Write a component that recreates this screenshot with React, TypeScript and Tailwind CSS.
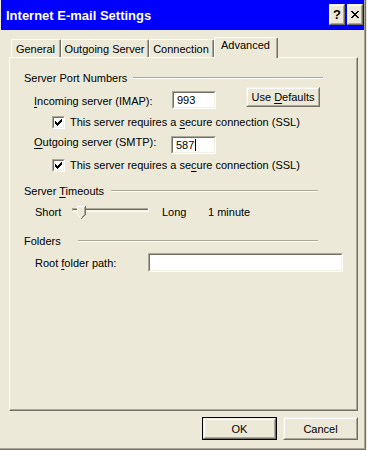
import React from "react";

const U = ({ children }: { children: React.ReactNode }) => (
  <span className="underline underline-offset-[2px] decoration-[1px]">{children}</span>
);

function Sunken({ className = "", children, pad = "pl-[3px]" }: { className?: string; children?: React.ReactNode; pad?: string }) {
  return (
    <div className={`border border-t-[#aca899] border-l-[#aca899] border-r-white border-b-white ${className}`}>
      <div className={`h-full w-full border border-t-[#716f64] border-l-[#716f64] border-r-[#f1efe2] border-b-[#f1efe2] bg-white flex items-center ${pad}`}>
        {children}
      </div>
    </div>
  );
}

function Raised({ className = "", children }: { className?: string; children?: React.ReactNode }) {
  return (
    <div className={`border border-t-[#f1efe2] border-l-[#f1efe2] border-r-[#716f64] border-b-[#716f64] bg-[#ece9d8] ${className}`}>
      <div className="h-full w-full border border-t-white border-l-white border-r-[#aca899] border-b-[#aca899] flex items-center justify-center">
        {children}
      </div>
    </div>
  );
}

const CHECK = ["......#", ".....##", "#...###", "##.###.", "#####..", ".###...", "..#...."];
const XGLYPH = ["##....##", ".##..##.", "..####..", "...##...", "..####..", ".##..##.", "##....##"];

function Pixels({ rows, ox, oy, w, h }: { rows: string[]; ox: number; oy: number; w: number; h: number }) {
  const rects: React.ReactNode[] = [];
  rows.forEach((r, y) =>
    r.split("").forEach((c, x) => {
      if (c === "#") rects.push(<rect key={`${x}-${y}`} x={x + ox} y={y + oy} width={1} height={1} fill="#000" />);
    })
  );
  return (
    <svg width={w} height={h} viewBox={`0 0 ${w} ${h}`} shapeRendering="crispEdges">
      {rects}
    </svg>
  );
}

function CheckBox() {
  return (
    <Sunken className="w-[13px] h-[13px] shrink-0" pad="">
      <Pixels rows={CHECK} ox={1} oy={1} w={9} h={9} />
    </Sunken>
  );
}

function Tab({ w, children }: { w: string; children: React.ReactNode }) {
  return (
    <div className={`${w} h-[18px] border-t border-l border-t-white border-l-white border-r border-r-[#716f64] rounded-tl-[2px] rounded-tr-[2px]`}>
      <div className="h-full border-r border-r-[#aca899] flex items-center justify-center">{children}</div>
    </div>
  );
}

function Group({ label, lw, lineW, mt }: { label: React.ReactNode; lw: string; lineW: string; mt: string }) {
  return (
    <div className={`${mt} h-[14px] flex items-center pl-[14px]`}>
      <span className={`${lw} shrink-0 whitespace-nowrap`}>{label}</span>
      <div className={`${lineW} h-[2px] border-t border-t-[#aca899] border-b border-b-white`} />
    </div>
  );
}

function Slider() {
  return (
    <svg width={77} height={16} viewBox="0 0 77 16" shapeRendering="crispEdges">
      <rect x={0} y={4} width={77} height={1} fill="#aca899" />
      <rect x={0} y={5} width={1} height={3} fill="#aca899" />
      <rect x={1} y={5} width={75} height={1} fill="#716f64" />
      <rect x={1} y={6} width={75} height={1} fill="#f1efe2" />
      <rect x={0} y={7} width={77} height={1} fill="#fff" />
      <rect x={76} y={4} width={1} height={4} fill="#fff" />
      {/* thumb */}
      <polygon points="5,2 14,2 14,10 10,14 9,14 5,10" fill="#ece9d8" />
      <rect x={5} y={2} width={8} height={1} fill="#fff" />
      <rect x={5} y={2} width={1} height={9} fill="#fff" />
      <rect x={13} y={2} width={1} height={9} fill="#716f64" />
      <rect x={12} y={3} width={1} height={8} fill="#aca899" />
      <rect x={6} y={11} width={1} height={1} fill="#fff" />
      <rect x={7} y={12} width={1} height={1} fill="#fff" />
      <rect x={8} y={13} width={1} height={1} fill="#fff" />
      <rect x={12} y={11} width={1} height={1} fill="#716f64" />
      <rect x={11} y={12} width={1} height={1} fill="#716f64" />
      <rect x={10} y={13} width={1} height={1} fill="#716f64" />
      <rect x={9} y={14} width={1} height={1} fill="#716f64" />
      <rect x={11} y={11} width={1} height={1} fill="#aca899" />
      <rect x={10} y={12} width={1} height={1} fill="#aca899" />
    </svg>
  );
}

export default function App() {
  return (
    <div className="w-[367px] h-[450px] bg-[#ece9d8] font-['Liberation_Sans',Arial,sans-serif] text-[11px] leading-[14px] text-black">
      <div className="w-[366px] h-[450px] border-r border-b border-r-[#716f64] border-b-[#716f64]">
        <div className="h-full border-r border-b border-r-[#aca899] border-b-[#aca899] pl-[1px]">
          {/* Title bar */}
          <div className="h-[30px] w-[363px] bg-[#0000ff] flex items-start">
            <div className="flex-1 text-white font-bold text-[13px] leading-[16px] pt-[8px] pl-[5px] whitespace-nowrap">
              Internet E-mail Settings
            </div>
            <div className="flex gap-[2px] pt-[4px] pr-[1px]">
              <Raised className="w-[16px] h-[21px]">
                <span className="font-bold text-[13px] leading-[13px] text-black">?</span>
              </Raised>
              <Raised className="w-[16px] h-[21px]">
                <Pixels rows={XGLYPH} ox={0} oy={0} w={8} h={7} />
              </Raised>
            </div>
          </div>

          {/* Tabs */}
          <div className="mt-[7px] h-[20px] flex items-end pl-[10px]">
            <Tab w="w-[50px]">General</Tab>
            <Tab w="w-[88px]">Outgoing Server</Tab>
            <Tab w="w-[65px]">Connection</Tab>
            <div className="w-[64px] h-[21px] mb-[-1px] relative z-10 bg-[#ece9d8] border-t border-l border-t-white border-l-white border-r border-r-[#716f64] rounded-tl-[2px] rounded-tr-[2px]">
              <div className="h-full border-r border-r-[#aca899] flex justify-center">Advanced</div>
            </div>
          </div>

          {/* Panel */}
          <div className="ml-[8px] w-[349px] h-[354px] border-t border-l border-t-white border-l-white border-r border-b border-r-[#716f64] border-b-[#716f64]">
            <div className="h-full border-r border-b border-r-[#aca899] border-b-[#aca899] flex flex-col">
              <Group mt="mt-[13px]" label="Server Port Numbers" lw="w-[109px]" lineW="w-[190px]" />

              <div className="mt-[2px] h-[22px] flex items-start pl-[24px]">
                <span className="w-[138px] shrink-0 mt-[7px] whitespace-nowrap">
                  <U>I</U>ncoming server (IMAP):
                </span>
                <Sunken className="w-[44px] h-[18px] mt-[4px]">993</Sunken>
                <Raised className="ml-[30px] w-[74px] h-[20px]">
                  <span className="whitespace-nowrap">
                    Use <U>D</U>efaults
                  </span>
                </Raised>
              </div>

              <div className="mt-[6px] h-[14px] flex items-center pl-[42px]">
                <CheckBox />
                <span className="ml-[5px] whitespace-nowrap">
                  This server requires a <U>s</U>ecure connection (SSL)
                </span>
              </div>

              <div className="mt-[6px] h-[19px] flex items-start pl-[24px]">
                <span className="w-[137px] shrink-0 whitespace-nowrap">
                  <U>O</U>utgoing server (SMTP):
                </span>
                <Sunken className="w-[45px] h-[18px] mt-[1px]">
                  587
                  <span className="w-[1px] h-[12px] bg-black ml-[1px]" />
                </Sunken>
              </div>

              <div className="mt-[4px] h-[14px] flex items-center pl-[42px]">
                <CheckBox />
                <span className="ml-[5px] whitespace-nowrap">
                  This server requires a se<U>c</U>ure connection (SSL)
                </span>
              </div>

              <Group
                mt="mt-[12px]"
                label={
                  <>
                    Server <U>T</U>imeouts
                  </>
                }
                lw="w-[87px]"
                lineW="w-[207px]"
              />

              <div className="mt-[6px] h-[16px] flex items-center pl-[25px]">
                <span className="w-[37px] shrink-0">Short</span>
                <Slider />
                <span className="ml-[13px] w-[46px] shrink-0">Long</span>
                <span className="whitespace-nowrap">1 minute</span>
              </div>

              <Group mt="mt-[14px]" label="Folders" lw="w-[54px]" lineW="w-[240px]" />

              <div className="mt-[5px] h-[19px] flex items-center pl-[25px]">
                <span className="w-[113px] shrink-0 whitespace-nowrap">
                  Root <U>f</U>older path:
                </span>
                <Sunken className="w-[195px] h-[19px]" />
              </div>
            </div>
          </div>

          {/* Bottom buttons */}
          <div className="mt-[6px] flex justify-end gap-[6px] pr-[6px]">
            <div className="w-[75px] h-[23px] border border-black">
              <Raised className="w-full h-full">OK</Raised>
            </div>
            <Raised className="w-[75px] h-[23px]">Cancel</Raised>
          </div>
        </div>
      </div>
    </div>
  );
}
